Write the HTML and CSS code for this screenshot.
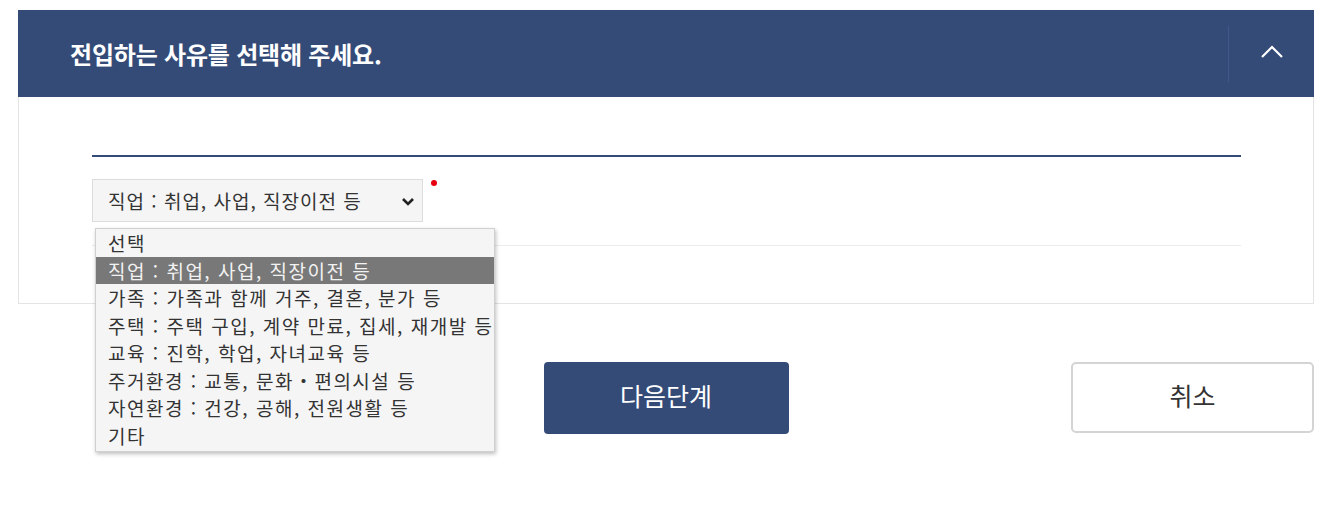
FILE: index.html
```html
<!DOCTYPE html>
<html lang="ko">
<head>
<meta charset="utf-8">
<title>전입 사유 선택</title>
<link rel="stylesheet" href="styles.css">
</head>
<body>
<div class="page">
  <section class="panel">
    <header class="panel-head">
      <h2 class="panel-title">전입하는 사유를 선택해 주세요.</h2>
      <button class="toggle" type="button" aria-label="접기">
        <svg width="24" height="16" viewBox="0 0 24 16"><path d="M2 13 L12 3 L22 13" fill="none" stroke="#fff" stroke-width="2.2"/></svg>
      </button>
    </header>
    <div class="panel-body">
      <div class="rule-top"></div>
      <div class="field">
        <div class="select-wrap">
          <div class="select">
            <span class="select-text">직업 : 취업, 사업, 직장이전 등</span>
            <svg class="select-arrow" width="14" height="9" viewBox="0 0 14 9"><path d="M2 2 L7 7 L12 2" fill="none" stroke="#222" stroke-width="2.6"/></svg>
          </div>
          <ul class="options">
            <li class="opt">선택</li>
            <li class="opt selected">직업 : 취업, 사업, 직장이전 등</li>
            <li class="opt">가족 : 가족과 함께 거주, 결혼, 분가 등</li>
            <li class="opt">주택 : 주택 구입, 계약 만료, 집세, 재개발 등</li>
            <li class="opt">교육 : 진학, 학업, 자녀교육 등</li>
            <li class="opt">주거환경 : 교통, 문화・편의시설 등</li>
            <li class="opt">자연환경 : 건강, 공해, 전원생활 등</li>
            <li class="opt">기타</li>
          </ul>
        </div>
        <span class="required"></span>
      </div>
      <div class="rule-bottom"></div>
    </div>
  </section>
  <div class="actions">
    <span></span>
    <button class="btn btn-primary" type="button">다음단계</button>
    <button class="btn btn-cancel" type="button">취소</button>
  </div>
</div>
</body>
</html>
```
FILE: styles.css
```css
* { box-sizing: border-box; }
html, body { margin: 0; padding: 0; background: #fff; }
body {
  font-family: "Noto Sans CJK KR", "Noto Sans", sans-serif;
  color: #333;
  min-height: 520px;
}
.page {
  width: 1296px;
  margin-left: 18px;
  padding-top: 10px;
  padding-bottom: 80px;
}
.panel {
  border: 1px solid #e4e4e4;
  border-top: none;
}
.panel-head {
  height: 87px;
  margin: 0 -1px;
  background: #344b78;
  display: flex;
  align-items: center;
  justify-content: space-between;
  padding-left: 52px;
}
.panel-title {
  margin: 0;
  color: #fff;
  font-size: 24px;
  font-weight: 700;
  letter-spacing: -0.2px;
}
.toggle {
  width: 86px;
  height: 56px;
  border: none;
  border-left: 1px solid #42588a;
  background: transparent;
  display: flex;
  align-items: center;
  justify-content: center;
  padding: 0 0 4px 0;
  cursor: pointer;
}
.panel-body {
  padding: 58px 72px 57px 73px;
}
.rule-top {
  height: 2px;
  background: #344b78;
}
.field {
  display: flex;
  align-items: flex-start;
  margin-top: 22px;
}
.select-wrap {
  position: relative;
}
.select {
  width: 331px;
  height: 43px;
  background: #f5f5f5;
  border: 1px solid #dcdcdc;
  display: flex;
  align-items: center;
  justify-content: space-between;
  padding: 0 7px 0 15px;
  font-size: 19px;
  letter-spacing: 1px;
  color: #333;
}
.select-arrow { margin-top: 2px; }
.required {
  width: 6px;
  height: 6px;
  border-radius: 50%;
  background: #e60012;
  margin: 1px 0 0 8px;
}
.rule-bottom {
  height: 1px;
  background: #ececec;
  margin-top: 23px;
}
.options {
  position: absolute;
  top: 49px;
  left: 3px;
  width: 400px;
  margin: 0;
  padding: 0 0 2px 0;
  list-style: none;
  background: #f5f5f5;
  border: 1px solid #d0d0d0;
  box-shadow: 1px 2px 4px rgba(0,0,0,0.25);
  z-index: 5;
}
.opt {
  height: 27.5px;
  line-height: 27.5px;
  padding-left: 12px;
  font-size: 19px;
  letter-spacing: 1.5px;
  color: #333;
  white-space: nowrap;
}
.opt.selected {
  background: #787878;
  color: #f2f2f2;
}
.actions {
  display: grid;
  grid-template-columns: 1fr auto 1fr;
  align-items: start;
  margin-top: 58px;
}
.btn {
  font-family: inherit;
  font-size: 25px;
  cursor: pointer;
  padding: 0 0 6px 0;
}
.btn-primary {
  width: 245px;
  height: 72px;
  background: #344b78;
  color: #fff;
  border: none;
  border-radius: 4px;
}
.btn-cancel {
  justify-self: end;
  width: 243px;
  height: 71px;
  background: #fff;
  color: #333;
  border: 2px solid #d4d4d4;
  border-radius: 5px;
}
```
